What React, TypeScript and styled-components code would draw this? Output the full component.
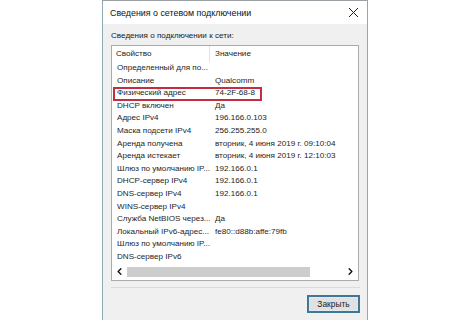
import React from 'react';
import styled, { createGlobalStyle } from 'styled-components';
import { ChevronLeft, ChevronRight } from 'lucide-react';

const GlobalStyle = createGlobalStyle`
  html, body {
    margin: 0;
    padding: 0;
    background: #ffffff;
    overflow: hidden;
  }
  body {
    font-family: "Liberation Sans", Arial, sans-serif;
    color: #1a1a1a;
  }
`;

const Page = styled.div`
  width: 470px;
  height: 320px;
  overflow: hidden;
  display: flex;
  align-items: flex-start;
  padding-left: 102px;
  box-sizing: border-box;
`;

const Window = styled.div`
  width: 266px;
  height: 340px;
  flex: none;
  border: 1px solid #8fa9b4;
  border-top-color: #9aa0a4;
  box-sizing: border-box;
  display: flex;
  flex-direction: column;
  background: #f0f0f0;
`;

const TitleBar = styled.div`
  height: 23px;
  flex: none;
  background: #ffffff;
  display: flex;
  align-items: center;
  justify-content: space-between;
  padding: 0 8px 0 7px;
  font-size: 8.9px;
  color: #111;
`;

const CloseGlyph = styled.svg`
  width: 11px;
  height: 11px;
`;

const Body = styled.div`
  flex: 1;
  display: flex;
  flex-direction: column;
  padding: 5px 7px 0 8px;
`;

const Caption = styled.div`
  font-size: 8.1px;
  height: 16px;
  line-height: 14px;
  flex: none;
  color: #1a1a1a;
`;

const ListView = styled.div`
  width: 248px;
  height: 236px;
  flex: none;
  overflow: hidden;
  border: 1px solid #a9abad;
  box-sizing: border-box;
  background: #ffffff;
  display: flex;
  flex-direction: column;
  font-size: 8.1px;
`;

const HeaderRow = styled.div`
  height: 16px;
  flex: none;
  display: grid;
  grid-template-columns: 98px 140px;
  align-items: center;
`;

const HeaderCell = styled.div<{ $divider?: boolean }>`
  padding-left: ${p => (p.$divider ? '4px' : '5px')};
  height: 16px;
  line-height: 16px;
  border-right: ${p => (p.$divider ? '1px solid #e3e3e3' : 'none')};
  color: #222;
`;

const Rows = styled.div`
  flex: none;
  display: flex;
  flex-direction: column;
`;

const Row = styled.div<{ $marked?: boolean }>`
  position: relative;
  height: 12.6px;
  line-height: 12.6px;
  display: grid;
  grid-template-columns: 98px 145px;
  white-space: nowrap;

  ${p =>
    p.$marked &&
    `
    &::after {
      content: '';
      position: absolute;
      left: 1px;
      top: -0.5px;
      width: 149px;
      height: 14px;
      border: 2px solid #c22e40;
      box-sizing: border-box;
    }
  `}
`;

const Cell = styled.div`
  padding-left: 5px;
  overflow: hidden;
  color: #1e1e1e;
`;

const ScrollBar = styled.div`
  height: 15px;
  flex: none;
  margin-top: auto;
  display: flex;
  align-items: center;
  gap: 2px;
  padding: 0 2px 1px 2px;
  color: #111;
`;

const ArrowBox = styled.span`
  width: 11px;
  height: 12px;
  flex: none;
  display: flex;
  align-items: center;
  justify-content: center;

  svg {
    display: block;
  }
`;

const ScrollTrack = styled.div`
  flex: 1;
  height: 10px;
  display: flex;
`;

const ScrollThumb = styled.div`
  width: 183px;
  height: 100%;
  background: #cdcdcd;
`;

const Separator = styled.div`
  height: 1px;
  flex: none;
  background: #dadada;
  margin: 6px 0 0 0;
  width: 249px;
`;

const Footer = styled.div`
  display: flex;
  flex: none;
  justify-content: flex-end;
  padding-top: 7px;
  width: 249px;
`;

const Button = styled.button`
  width: 53px;
  height: 18px;
  border: 2px solid #3f7896;
  background: #e1e1e1;
  font-family: inherit;
  font-size: 8.4px;
  color: #222;
  padding: 0;
  box-shadow: inset 0 0 0 1px #dfe9ee;
`;

const rows: [string, string][] = [
  ['Определенный для по...', ''],
  ['Описание', 'Qualcomm'],
  ['Физический адрес', '74-2F-68-8'],
  ['DHCP включен', 'Да'],
  ['Адрес IPv4', '196.166.0.103'],
  ['Маска подсети IPv4', '256.255.255.0'],
  ['Аренда получена', 'вторник, 4 июня 2019 г. 09:10:04'],
  ['Аренда истекает', 'вторник, 4 июня 2019 г. 12:10:03'],
  ['Шлюз по умолчанию IP...', '192.166.0.1'],
  ['DHCP-сервер IPv4', '192.166.0.1'],
  ['DNS-сервер IPv4', '192.166.0.1'],
  ['WINS-сервер IPv4', ''],
  ['Служба NetBIOS через...', 'Да'],
  ['Локальный IPv6-адрес...', 'fe80::d88b:affe:79fb'],
  ['Шлюз по умолчанию IP...', ''],
  ['DNS-сервер IPv6', ''],
];

const App: React.FC = () => {
  return (
    <>
      <GlobalStyle />
      <Page>
        <Window>
          <TitleBar>
            <span>Сведения о сетевом подключении</span>
            <CloseGlyph viewBox="0 0 11 11">
              <path d="M1 1 L10 10 M10 1 L1 10" stroke="#222" strokeWidth="1" />
            </CloseGlyph>
          </TitleBar>
          <Body>
            <Caption>Сведения о подключении к сети:</Caption>
            <ListView>
              <HeaderRow>
                <HeaderCell $divider>Свойство</HeaderCell>
                <HeaderCell>Значение</HeaderCell>
              </HeaderRow>
              <Rows>
                {rows.map(([name, value], i) => (
                  <Row key={i} $marked={i === 2}>
                    <Cell>{name}</Cell>
                    <Cell>{value}</Cell>
                  </Row>
                ))}
              </Rows>
              <ScrollBar>
                <ArrowBox>
                  <ChevronLeft size={11} strokeWidth={3} color="#111" />
                </ArrowBox>
                <ScrollTrack>
                  <ScrollThumb />
                </ScrollTrack>
                <ArrowBox>
                  <ChevronRight size={11} strokeWidth={3} color="#111" />
                </ArrowBox>
              </ScrollBar>
            </ListView>
            <Separator />
            <Footer>
              <Button>Закрыть</Button>
            </Footer>
          </Body>
        </Window>
      </Page>
    </>
  );
};

export default App;
